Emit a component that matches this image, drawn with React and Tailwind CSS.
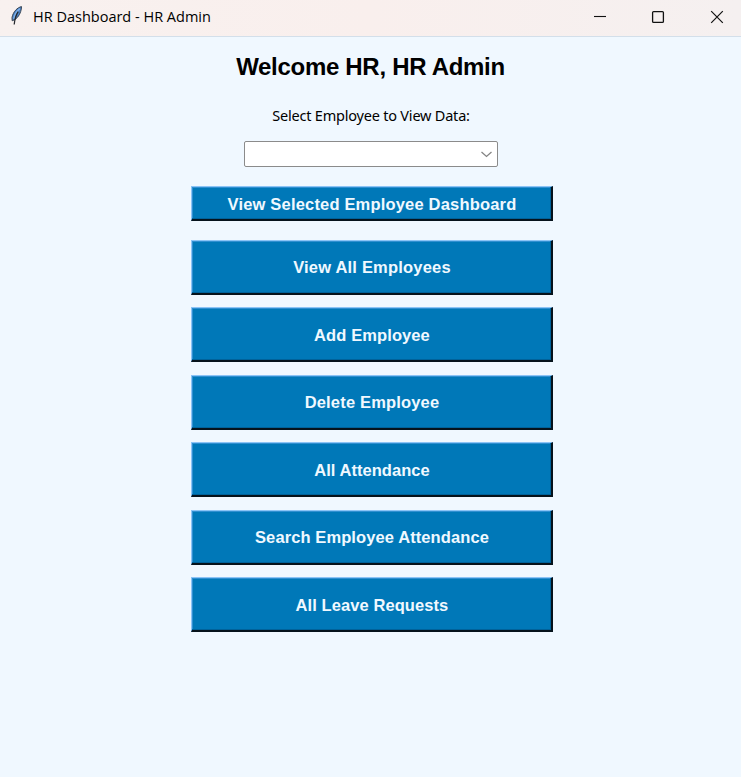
const actions = [
  { label: 'View All Employees', tracking: 'tracking-[0.2px]' },
  { label: 'Add Employee', tracking: 'tracking-[0.1px]' },
  { label: 'Delete Employee', tracking: 'tracking-[0.17px]' },
  { label: 'All Attendance', tracking: 'tracking-[0.05px]' },
  { label: 'Search Employee Attendance', tracking: 'tracking-[0.1px]' },
  { label: 'All Leave Requests', tracking: 'tracking-[0.08px]' },
];

const buttonBase =
  "flex w-[362px] items-center justify-center border-t border-l border-r-2 border-b-2 border-t-[#8cc4f6] border-l-[#8cc4f6] border-r-[#06131c] border-b-[#06131c] bg-[#0078b8] pt-[2px] pl-px font-['Liberation_Sans',Arial,sans-serif] text-[16.5px] leading-none font-bold whitespace-nowrap text-[#f0f8ff] shadow-[inset_-1px_-1px_0_#00629a,inset_1px_1px_0_#2f8fd0]";

function Feather() {
  return (
    <svg width="16" height="22" viewBox="0 0 16 22">
      <path d="M12.5 1.6C8.4 2.5 4.2 6.6 3 12.5l.2 3.3c4-1.2 7.3-5 8.5-9.3.4-1.8.9-3.3.8-4.9Z" fill="#4a83c8" stroke="#3a4552" strokeWidth="1" />
      <path d="M10.8 3.7C7.8 6.2 5.6 10 4.8 14" stroke="#7fb0e8" strokeWidth="1.5" fill="none" />
      <path d="M9.2 6.7C6.9 10 5.8 14 5.2 19.5" stroke="#26292e" strokeWidth="1.3" fill="none" />
    </svg>
  );
}

export default function App() {
  return (
    <div className="flex h-[777px] w-[741px] flex-col overflow-hidden bg-[#f0f8ff] text-black">
      <header className="flex h-[37px] shrink-0 items-start border-b border-[#d3dfea] bg-linear-to-r from-[#f8f1ef] via-[#f9efed] to-[#f5f0f0]">
        <div className="mt-[5px] ml-[9px] w-6">
          <Feather />
        </div>
        <h1 className="mt-[7px] font-['Open_Sans','Noto_Sans',sans-serif] text-[14.5px] leading-5 font-normal whitespace-nowrap">
          HR Dashboard - HR Admin
        </h1>
        <div className="mt-[10px] mr-[17px] ml-auto flex gap-[45px]">
          <svg width="14" height="14" viewBox="0 0 14 14" fill="none" stroke="#111" strokeWidth="1.1">
            <path d="M2 6.5h12" />
          </svg>
          <svg width="14" height="14" viewBox="0 0 14 14" fill="none" stroke="#111" strokeWidth="1.3">
            <rect x="1.6" y="1.6" width="10.8" height="10.8" rx="1" />
          </svg>
          <svg width="14" height="14" viewBox="0 0 14 14" fill="none" stroke="#111" strokeWidth="1.2">
            <path d="M1.2 1.2l11.6 11.6M12.8 1.2L1.2 12.8" />
          </svg>
        </div>
      </header>
      <main className="flex flex-col items-center">
        <h2 className="mt-[15px] h-7 font-['Liberation_Sans',Arial,sans-serif] text-[24px] leading-[29px] font-bold tracking-[-0.3px] whitespace-nowrap">
          Welcome HR, HR Admin
        </h2>
        <label className="mt-[25px] mb-px ml-px h-5 font-['Noto_Sans','Open_Sans',sans-serif] text-[14.5px] leading-5 tracking-[-0.21px] whitespace-nowrap">
          Select Employee to View Data:
        </label>
        <button className="mt-[15px] ml-px flex h-[26px] w-[254px] items-center justify-end rounded-[2px] border border-[#8b8b8b] bg-white pr-[5px]">
          <svg width="12" height="8" viewBox="0 0 12 8" fill="none" stroke="#858585" strokeWidth="1.3">
            <path d="M1.5 2l5 4.5 5-4.5" />
          </svg>
        </button>
        <button className={`${buttonBase} mt-[19px] ml-[3px] h-[35px] tracking-[0.18px]`}>View Selected Employee Dashboard</button>
        <div className="mt-[18.5px] ml-[3px] flex flex-col gap-[12.5px]">
          {actions.map((a) => (
            <button key={a.label} className={`${buttonBase} h-[55px] ${a.tracking}`}>
              {a.label}
            </button>
          ))}
        </div>
      </main>
    </div>
  );
}
